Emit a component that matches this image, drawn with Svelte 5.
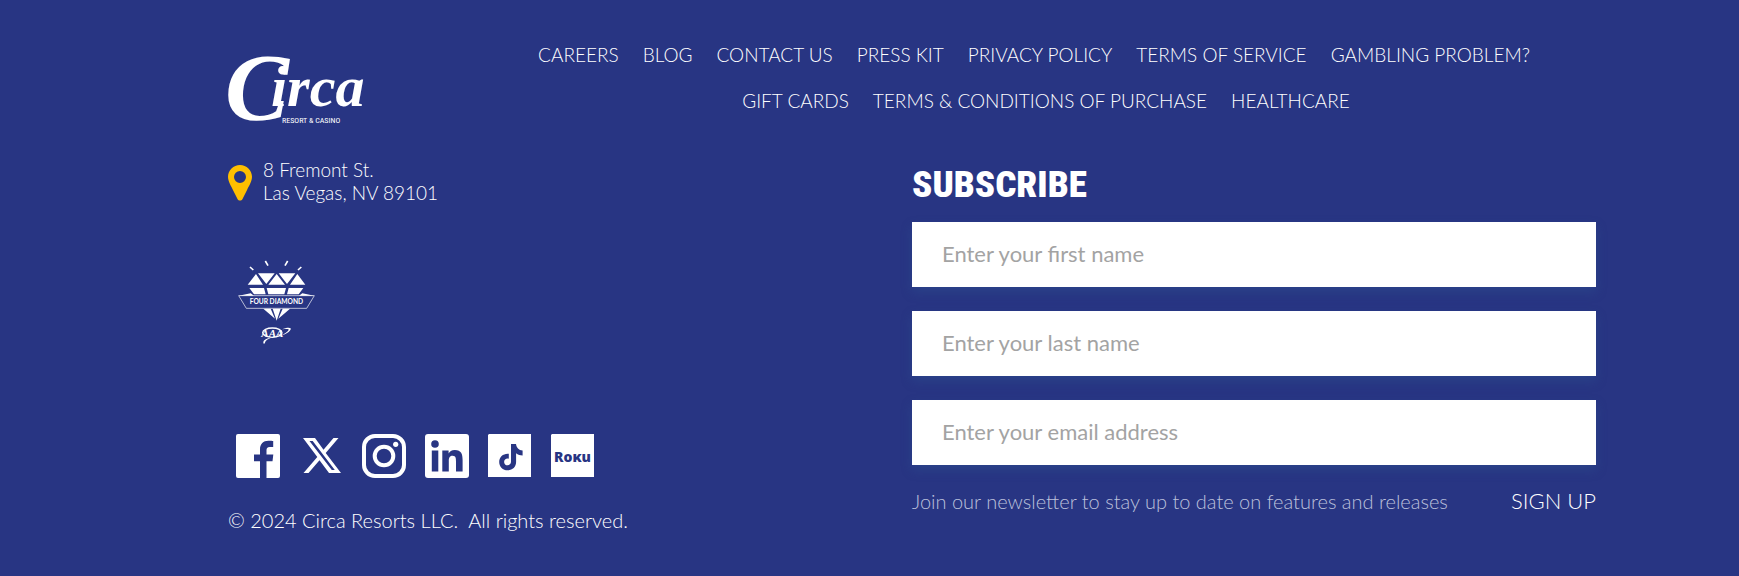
<script lang="ts">
	const links = [
		'Careers',
		'Blog',
		'Contact Us',
		'Press Kit',
		'Privacy Policy',
		'Terms of Service',
		'Gambling Problem?',
		'Gift Cards',
		'Terms & Conditions of Purchase',
		'Healthcare'
	];

	const fields = [
		{ id: 'first-name', type: 'text', label: 'Enter your first name' },
		{ id: 'last-name', type: 'text', label: 'Enter your last name' },
		{ id: 'email', type: 'email', label: 'Enter your email address' }
	];
</script>

<footer class="footer">
	<div class="top">
		<a class="logo" href="/" aria-label="Circa Resort & Casino">
			<svg width="138" height="70" viewBox="0 0 138 70" fill="#fff" aria-hidden="true">
				<text class="script" x="-3" y="66" font-size="96">C<tspan x="43" y="52" font-size="58">irca</tspan></text>
				<text class="tagline" x="54" y="69" font-size="8">RESORT &amp; CASINO</text>
			</svg>
		</a>
		<nav class="nav" aria-label="Footer">
			{#each links as link}
				<a href="/">{link}</a>
			{/each}
		</nav>
	</div>

	<div class="columns">
		<div class="info">
			<a class="address" href="/">
				<svg class="pin" width="24" height="36" viewBox="0 0 24 36" aria-hidden="true">
					<path
						fill="#ffbf00"
						fill-rule="evenodd"
						d="M12 0C5.400 0 0 5.200 0 11.800c0 5 3.200 9.200 5.200 13.600l4.300 8.500c1 2 4 2 5 0l4.300-8.500c2-4.400 5.200-8.600 5.200-13.600C24 5.200 18.600 0 12 0zm0 6a6 6 0 1 1 0 12 6 6 0 0 1 0-12z"
					/>
				</svg>
				<span>8 Fremont St.<br />Las Vegas, NV 89101</span>
			</a>

			<svg class="award" width="77" height="85" viewBox="38 30 231 255" fill="#fff" role="img" aria-label="AAA Four Diamond">
				<path
					stroke="#fff"
					stroke-width="5"
					d="M74 51l10 9M120 33l8 14M187 33l-8 14M228 51l-10 9"
				/>
				<path
					d="M92 72l21 32H67zM98 70h50l-25 32zM154 72l25 32h-50zM160 70h50l-25 32zM216 72l24 32h-46zM72 114h44l5 19H86zM124 114h58l-5 19h-48zM190 114h44l-14 19h-35zM114 176h22l13 30zM142 176h24l-12 36zM172 176h22l-35 30z"
				/>
				<path
					fill="none"
					stroke="#fff"
					stroke-width="2"
					d="M84 137H40l23 38h181l23-38h-44z"
				/>
				<path d="M40 137l36-7 10 7zM267 137l-36-7-10 7z" />
				<text class="diamond-text" x="73" y="163" font-size="20">FOUR DIAMOND</text>
				<text class="aaa-text" x="108" y="260" font-size="33">AAA</text>
				<ellipse cx="141" cy="248" rx="29" ry="14" fill="none" stroke="#fff" stroke-width="4" />
				<path d="M170 238c14-7 32-7 25 2-5 8-18 15-29 17 12-6 22-12 24-17 2-4-9-3-20-2zM115 281c-4-9 4-16 24-18-14 5-20 9-20 17z" />
			</svg>

			<div class="social">
				<a href="/" aria-label="Facebook">
					<svg width="44" height="44" viewBox="0 0 44 44" fill="#fff">
						<path
							d="M2 0h40a2 2 0 0 1 2 2v40a2 2 0 0 1-2 2H30.500V27.200h6l.8-6.700h-6.800v-4.300c0-2 .6-3.300 3.400-3.300h3.300V7c-.7-.1-2.600-.3-4.900-.3-5 0-8.300 3-8.300 8.600v5.200h-6v6.700h6V44H2a2 2 0 0 1-2-2V2a2 2 0 0 1 2-2z"
						/>
					</svg>
				</a>
				<a href="/" aria-label="X">
					<svg width="44" height="44" viewBox="0 0 44 44" fill="#fff">
						<path
							fill-rule="evenodd"
							d="M4 4h12l8.500 11.700L34.500 4h5L26.700 19 42 39H30l-9.500-12.800L9.500 39h-5l13.800-16zM10.500 7l22.300 29h3L13.700 7z"
						/>
					</svg>
				</a>
				<a href="/" aria-label="Instagram">
					<svg width="44" height="44" viewBox="0 0 44 44" fill="none" stroke="#fff" stroke-width="4">
						<rect x="2" y="2" width="40" height="40" rx="11" />
						<circle cx="22" cy="22" r="9.300" />
						<circle cx="33.700" cy="10.300" r="2.600" fill="#fff" stroke="none" />
					</svg>
				</a>
				<a href="/" aria-label="LinkedIn">
					<svg width="44" height="44" viewBox="0 0 44 44">
						<rect width="44" height="44" rx="3" fill="#fff" />
						<path
							fill="#283583"
							d="M6.800 16.500h6.500v21H6.800zM10 6.200a3.800 3.800 0 1 1 0 7.600 3.800 3.800 0 0 1 0-7.600zM17.300 16.500h6.300v2.900c.9-1.700 3-3.400 6.200-3.400 6.600 0 7.800 4.300 7.800 10v11.500H31V27.300c0-2.500 0-5.600-3.400-5.600s-3.800 2.600-3.800 5.400v10.400h-6.500z"
						/>
					</svg>
				</a>
				<a href="/" aria-label="TikTok">
					<svg width="44" height="44" viewBox="0 0 44 44">
						<path fill="#fff" d="M1 0h42v43H0V1z" />
						<path
							fill="#283583"
							d="M23 10h5c.4 3.700 2.800 6.200 6.600 6.500v5c-2.500 0-4.700-.8-6.500-2.200V28c0 5-3.600 8.200-8.400 8.200-4.900 0-8.500-3.500-8.500-8.300 0-5.100 4.300-8.800 9.600-8.200v5c-2.500-.7-4.700.8-4.700 3.200 0 2 1.500 3.400 3.500 3.400s3.400-1.400 3.400-3.700z"
						/>
					</svg>
				</a>
				<a href="/" aria-label="Roku">
					<svg width="44" height="44" viewBox="0 0 44 44">
						<path fill="#fff" d="M1 0h42v43H0V1z" />
						<text class="roku-text" x="3" y="28" font-size="14">Roĸu</text>
					</svg>
				</a>
			</div>

			<p class="copyright">© 2024 Circa Resorts LLC.&nbsp; All rights reserved.</p>
		</div>

		<form class="subscribe" onsubmit={(e) => e.preventDefault()}>
			<h2>SUBSCRIBE</h2>
			<div class="fields">
				{#each fields as field}
					<input id={field.id} name={field.id} type={field.type} placeholder={field.label} aria-label={field.label} />
				{/each}
			</div>
			<div class="actions">
				<p>Join our newsletter to stay up to date on features and releases</p>
				<button type="submit">SIGN UP</button>
			</div>
		</form>
	</div>
</footer>

<style>
	:global(body) {
		margin: 0;
		background: #283583;
	}

	.footer {
		box-sizing: border-box;
		padding: 32px 143px 40px 228px;
		background: #283583;
		color: #fff;
		font-family: 'Lato', 'Open Sans', sans-serif;
		font-size: 19px;
		font-weight: 300;
	}

	a {
		color: inherit;
		text-decoration: none;
	}

	svg {
		display: block;
		flex-shrink: 0;
		overflow: visible;
	}

	.top {
		display: flex;
	}

	.logo {
		flex: 0 0 268px;
		padding-top: 22px;
	}

	.script {
		font-family: 'Liberation Serif', serif;
		font-style: italic;
		font-weight: 700;
	}

	.tagline {
		font-family: 'Roboto Condensed', 'Liberation Sans Narrow', sans-serif;
		font-weight: 400;
	}

	.nav {
		display: flex;
		flex: 1;
		flex-wrap: wrap;
		justify-content: center;
		column-gap: 24px;
		line-height: 46px;
		text-transform: uppercase;
	}

	.nav a:nth-child(7) {
		margin-right: 24px;
	}

	.columns {
		display: grid;
		grid-template-columns: 1fr 1fr;
	}

	.info {
		padding-top: 34px;
	}

	.address {
		display: flex;
		align-items: center;
		gap: 11px;
		line-height: 23px;
	}

	.pin {
		margin-top: 4px;
	}

	.award {
		margin: 56px 0 89px 10px;
	}

	.diamond-text {
		font-family: 'Lato', sans-serif;
		font-weight: 700;
	}

	.aaa-text {
		font-family: 'Liberation Serif', serif;
		font-style: italic;
		font-weight: 700;
	}

	.social {
		display: flex;
		gap: 19px;
		margin-left: 8px;
	}

	.roku-text {
		fill: #283583;
		font-family: 'Open Sans', sans-serif;
		font-weight: 800;
	}

	p {
		margin: 0;
	}

	.copyright {
		margin-top: 30px;
		font-size: 20px;
		line-height: 24px;
	}

	.subscribe {
		padding-top: 41px;
	}

	h2 {
		margin: 0 0 17px;
		font-family: 'Roboto Condensed', 'Liberation Sans Narrow', sans-serif;
		font-size: 37px;
		font-weight: 900;
		line-height: 40px;
	}

	.fields {
		display: grid;
		gap: 24px;
	}

	input {
		box-sizing: border-box;
		width: 100%;
		height: 65px;
		padding: 0 30px 3px;
		border: 0;
		border-radius: 0;
		background: #fff;
		box-shadow: 0 5px 10px rgba(45, 85, 145, 0.4);
		color: #333;
		font-family: inherit;
		font-size: 22px;
		font-weight: 400;
	}

	input::placeholder {
		color: #a3a3a3;
		opacity: 1;
	}

	.actions {
		display: flex;
		align-items: center;
		justify-content: space-between;
		margin-top: 24px;
		line-height: 24px;
	}

	.actions p {
		color: #bcc1dc;
		font-size: 20px;
	}

	button {
		padding: 0;
		border: 0;
		background: none;
		color: inherit;
		cursor: pointer;
		font-family: inherit;
		font-size: 22px;
		font-weight: 300;
		line-height: 24px;
	}
</style>
